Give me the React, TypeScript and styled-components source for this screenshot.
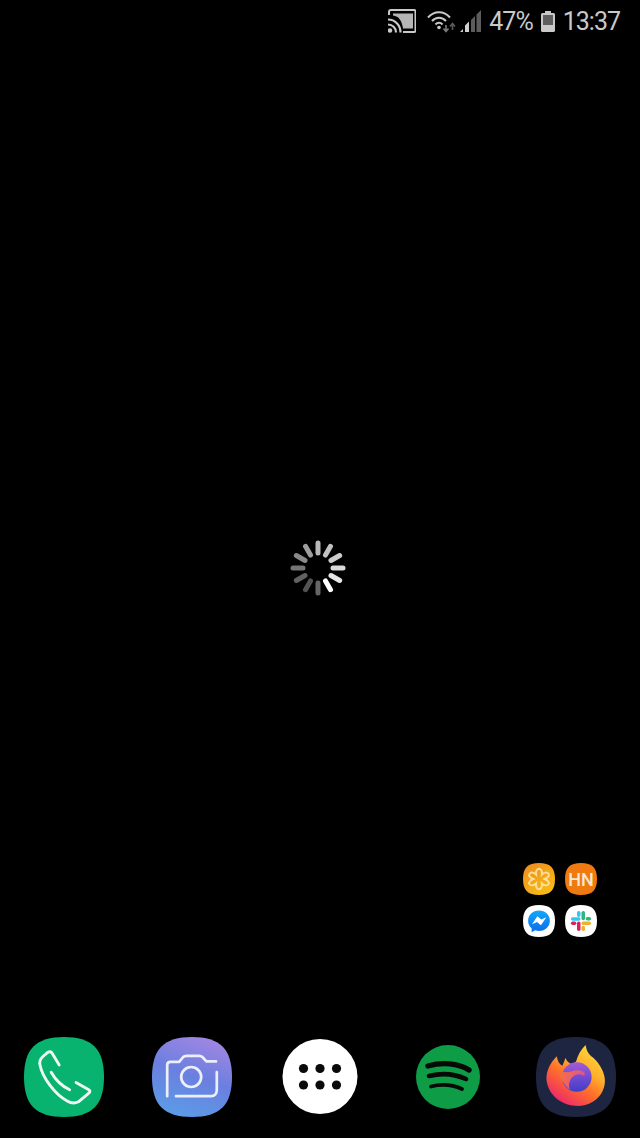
import React from 'react';
import styled, { createGlobalStyle } from 'styled-components';

const GlobalStyle = createGlobalStyle`
  html, body {
    margin: 0;
    padding: 0;
    background: #000;
  }
`;

const Screen = styled.div`
  width: 640px;
  height: 1138px;
  background: #000;
  display: flex;
  flex-direction: column;
  overflow: hidden;
  font-family: Roboto, "Liberation Sans", sans-serif;
`;

const StatusBar = styled.div`
  height: 45px;
  flex: none;
  display: flex;
  align-items: center;
  justify-content: flex-end;
  padding: 0 20px 1px 0;
  box-sizing: border-box;
  color: #c9c9c9;
`;

const StatusIcon = styled.svg<{ $right: number }>`
  display: block;
  flex: none;
  margin-right: ${(props) => props.$right}px;
  margin-bottom: 2px;
`;

const StatusText = styled.span<{ $right?: number }>`
  font-size: 25px;
  line-height: 30px;
  letter-spacing: -1px;
  margin-right: ${(props) => props.$right ?? 0}px;
`;

const Stage = styled.div`
  flex: 1;
  display: flex;
  flex-direction: column;
  align-items: center;
`;

const Spinner = styled.svg`
  display: block;
  margin-top: 485px;
  margin-right: 4px;
`;

const Folder = styled.div`
  margin-top: auto;
  margin-bottom: 100px;
  margin-right: 43px;
  align-self: flex-end;
  display: grid;
  grid-template-columns: repeat(2, 32px);
  gap: 10px;
`;

const FolderIcon = styled.div`
  width: 32px;
  height: 32px;
  position: relative;
`;

const FolderLabel = styled.span`
  position: absolute;
  inset: 0;
  display: flex;
  align-items: center;
  justify-content: center;
  color: #fbe6d0;
  font-size: 18px;
  font-weight: 500;
`;

const Dock = styled.div`
  flex: none;
  display: grid;
  grid-template-columns: repeat(5, 128px);
  justify-items: center;
  align-items: center;
  padding-bottom: 21px;
`;

const DockIcon = styled.svg`
  display: block;
  width: 80px;
  height: 80px;
`;

const Squircle = 'M50 0C85 0 100 15 100 50C100 85 85 100 50 100C15 100 0 85 0 50C0 15 15 0 50 0Z';

const CastIcon = () => (
  <StatusIcon $right={11} width="28" height="24" viewBox="0 0 28 24">
    <path d="M1 6V3a2 2 0 0 1 2-2h23a1.500 1.500 0 0 1 1.500 1.500v19a1.500 1.500 0 0 1-1.500 1.500H15" fill="none" stroke="currentColor" strokeWidth="2" />
    <path d="M5 4.500h20v15H15C14 12 11 7 5 6.500Z" fill="currentColor" opacity="0.9" />
    <path d="M0 10.500C7 10.500 12.500 16 12.500 23.500M0 15.500C4.500 15.500 8 19 8 23.500" fill="none" stroke="currentColor" strokeWidth="2.200" />
    <circle cx="2" cy="21.500" r="2.300" fill="currentColor" />
  </StatusIcon>
);

const WifiIcon = () => (
  <StatusIcon $right={4} width="29" height="23" viewBox="0 0 29 23">
    <path d="M1 7.500C7 .5 17 .5 23 7.500M5 11C9 6.500 15 6.500 19 11M8.500 14.500C10.500 12.300 13.500 12.300 15.500 14.500" fill="none" stroke="currentColor" strokeWidth="2" />
    <circle cx="12" cy="17.500" r="1.800" fill="currentColor" />
    <path d="M19 15v5.500M16.500 18.500l2.500 3 2.500-3" fill="none" stroke="#7a7a7a" strokeWidth="1.600" />
    <path d="M25.500 20v-6M23 16.500l2.500-3 2.500 3" fill="none" stroke="#5a5a5a" strokeWidth="1.600" />
  </StatusIcon>
);

const SignalIcon = () => (
  <StatusIcon $right={8} width="21" height="22" viewBox="0 0 21 22">
    <path d="M0 22l3-3v3Z M5 22v-6.500l4-4V22Z" fill="#d0d0d0" />
    <path d="M11 22V10l4-4v16Z M16.500 22V4.500L21 0v22Z" fill="#5c5c5c" />
  </StatusIcon>
);

const BatteryIcon = () => (
  <StatusIcon $right={8} width="14" height="21" viewBox="0 0 14 21">
    <path d="M4 0h6v2h2.500A1.500 1.500 0 0 1 14 3.500V19.500A1.500 1.500 0 0 1 12.500 21H1.500A1.500 1.500 0 0 1 0 19.500V3.500A1.500 1.500 0 0 1 1.500 2H4Z" fill="#c9c9c9" />
    <rect x="2" y="4" width="10" height="10" fill="#5e5e5e" />
  </StatusIcon>
);

// clockwise from 12 o'clock
const spokes = [0.72, 0.76, 0.8, 0.85, 0.9, 1, 0.4, 0.32, 0.38, 0.46, 0.54, 0.62];

const LoadingSpinner = () => (
  <Spinner width="76" height="76" viewBox="-38 -38 76 76">
    {spokes.map((opacity, i) => (
      <line
        key={i}
        x1="0"
        y1="-15"
        x2="0"
        y2="-25"
        stroke="#fff"
        strokeOpacity={opacity}
        strokeWidth="5"
        strokeLinecap="round"
        transform={`rotate(${i * 30})`}
      />
    ))}
  </Spinner>
);

const FlowerTile = () => (
  <FolderIcon>
    <svg width="32" height="32" viewBox="0 0 100 100">
      <defs>
        <linearGradient id="flowerBg" x1="0" y1="0" x2="0.6" y2="1">
          <stop offset="0" stopColor="#ee8a22" />
          <stop offset="1" stopColor="#f8bb14" />
        </linearGradient>
      </defs>
      <path d={Squircle} fill="url(#flowerBg)" />
      <path
        d="M50 18C58 18 60 28 59 36C65 30 76 27 80 34C84 41 75 47 68 50C75 53 84 59 80 66C76 73 65 70 59 64C60 72 58 82 50 82C42 82 40 72 41 64C35 70 24 73 20 66C16 59 25 53 32 50C25 47 16 41 20 34C24 27 35 30 41 36C40 28 42 18 50 18Z"
        fill="none"
        stroke="#fbdf9a"
        strokeWidth="6"
      />
    </svg>
  </FolderIcon>
);

const HackerNewsTile = () => (
  <FolderIcon>
    <svg width="32" height="32" viewBox="0 0 100 100">
      <path d={Squircle} fill="#ee7a10" />
    </svg>
    <FolderLabel>HN</FolderLabel>
  </FolderIcon>
);

const MessengerTile = () => (
  <FolderIcon>
    <svg width="32" height="32" viewBox="0 0 100 100">
      <defs>
        <linearGradient id="messengerBg" x1="0.5" y1="0" x2="0.5" y2="1">
          <stop offset="0" stopColor="#12a8fa" />
          <stop offset="1" stopColor="#0a6cf0" />
        </linearGradient>
      </defs>
      <path d={Squircle} fill="#fff" />
      <path
        d="M50 17C30 17 16 31 16 49C16 59 20 67 27 73V85L38 79C42 80 46 81 50 81C70 81 84 67 84 49C84 31 70 17 50 17Z"
        fill="url(#messengerBg)"
      />
      <path d="M28 60L45 35L57 45L73 38L56 63L44 53Z" fill="#fff" />
    </svg>
  </FolderIcon>
);

const SlackTile = () => (
  <FolderIcon>
    <svg width="32" height="32" viewBox="0 0 100 100">
      <path d={Squircle} fill="#fff" />
      <g fill="none" strokeWidth="11" strokeLinecap="round" strokeLinejoin="round">
        <path d="M43 24V32" stroke="#36c5f0" />
        <path d="M24 44H43" stroke="#36c5f0" />
        <path d="M57 24V42" stroke="#2eb67d" />
        <path d="M76 43H70" stroke="#2eb67d" />
        <path d="M57 57H76" stroke="#ecb22e" />
        <path d="M57 70V76" stroke="#ecb22e" />
        <path d="M43 57V76" stroke="#e01e5a" />
        <path d="M24 57H30" stroke="#e01e5a" />
      </g>
    </svg>
  </FolderIcon>
);

const PhoneApp = () => (
  <DockIcon viewBox="0 0 100 100">
    <path d={Squircle} fill="#07b36e" />
    <g fill="none" stroke="#eef8f3" strokeWidth="3.600" strokeLinecap="round" strokeLinejoin="round">
      <path d="M44 35L35 20C34 18 32 18 30 19L23 25C20 28 19 31 20 35C23 51 39 72 54 80C59 83 64 83 68 81L80 71C83 69 83 67 81 66L65 57" />
      <path d="M34 44C39 53 47 61 57 66" />
    </g>
  </DockIcon>
);

const CameraApp = () => (
  <DockIcon viewBox="0 0 100 100">
    <defs>
      <linearGradient id="cameraBg" x1="0.75" y1="0" x2="0.4" y2="1">
        <stop offset="0" stopColor="#a287e2" />
        <stop offset="0.5" stopColor="#6b7fe0" />
        <stop offset="1" stopColor="#5c9ae6" />
      </linearGradient>
    </defs>
    <path d={Squircle} fill="url(#cameraBg)" />
    <g fill="none" stroke="#eceef9" strokeWidth="3.400" strokeLinecap="round" strokeLinejoin="round">
      <path d="M19 74V35C19 32 20 31 23 31H34L39 25C40 24 41 23.500 43 23.500H59C61 23.500 62 24 63 25L68 30.500H80" />
      <path d="M81 44V66C81 71 78 74 74 74H30" />
      <circle cx="49" cy="50" r="12.500" />
    </g>
  </DockIcon>
);

const AppsButton = () => (
  <DockIcon viewBox="0 0 80 80">
    <circle cx="40" cy="39.500" r="37.500" fill="#fff" />
    {[0, 1, 2].flatMap((col) =>
      [0, 1].map((row) => (
        <circle key={`${col}-${row}`} cx={23.500 + col * 16.500} cy={31.500 + row * 16.500} r="4.600" fill="#0a0a0a" />
      ))
    )}
  </DockIcon>
);

const SpotifyApp = () => (
  <DockIcon viewBox="0 0 80 80">
    <circle cx="40" cy="40" r="32" fill="#0f9c47" />
    <g fill="none" stroke="#050a06" strokeLinecap="round">
      <path d="M20 29C34 25 50 26 61 33" strokeWidth="5.400" />
      <path d="M21 39C33 36 47 37 58 42" strokeWidth="4.600" />
      <path d="M23 49.500C33 47 45 48 54 52" strokeWidth="3.800" />
    </g>
  </DockIcon>
);

const FirefoxApp = () => (
  <DockIcon viewBox="0 0 100 100">
    <defs>
      <linearGradient id="foxBody" x1="0.85" y1="0.05" x2="0.25" y2="0.95">
        <stop offset="0" stopColor="#ffd83a" />
        <stop offset="0.35" stopColor="#ffb22c" />
        <stop offset="0.62" stopColor="#ff6f2a" />
        <stop offset="1" stopColor="#ee2a68" />
      </linearGradient>
      <linearGradient id="foxGlobe" x1="0.5" y1="0" x2="0.5" y2="1">
        <stop offset="0" stopColor="#a45ad8" />
        <stop offset="1" stopColor="#3f3ec8" />
      </linearGradient>
      <linearGradient id="foxSwirl" x1="0" y1="0" x2="1" y2="0.4">
        <stop offset="0" stopColor="#f8762c" />
        <stop offset="1" stopColor="#e0509a" />
      </linearGradient>
    </defs>
    <path d={Squircle} fill="#1d2540" />
    <path
      d="M26 24C27 30 29 34 33 36L37 26C38 30 41 33 45 34C47 33 48 32 50 31C52 23 56 16 62 10C63 16 65 21 69 24C75 28 81 36 84 44C87 52 87 60 83 68C77 80 64 87 49 86C30 85 14 71 13 52C13 42 18 32 26 24Z"
      fill="url(#foxBody)"
    />
    <circle cx="51" cy="50" r="18.500" fill="url(#foxGlobe)" />
    <path
      d="M28 40C33 44 38 45 44 43C49 41 56 41 60 44C62 46 61 48 59 48C54 45 47 47 44 52C41 57 40 62 43 66C36 62 30 52 28 40Z"
      fill="url(#foxSwirl)"
    />
  </DockIcon>
);

export default function App() {
  return (
    <Screen>
      <GlobalStyle />
      <StatusBar>
        <CastIcon />
        <WifiIcon />
        <SignalIcon />
        <StatusText $right={8}>47%</StatusText>
        <BatteryIcon />
        <StatusText>13:37</StatusText>
      </StatusBar>
      <Stage>
        <LoadingSpinner />
        <Folder>
          <FlowerTile />
          <HackerNewsTile />
          <MessengerTile />
          <SlackTile />
        </Folder>
      </Stage>
      <Dock>
        <PhoneApp />
        <CameraApp />
        <AppsButton />
        <SpotifyApp />
        <FirefoxApp />
      </Dock>
    </Screen>
  );
}
